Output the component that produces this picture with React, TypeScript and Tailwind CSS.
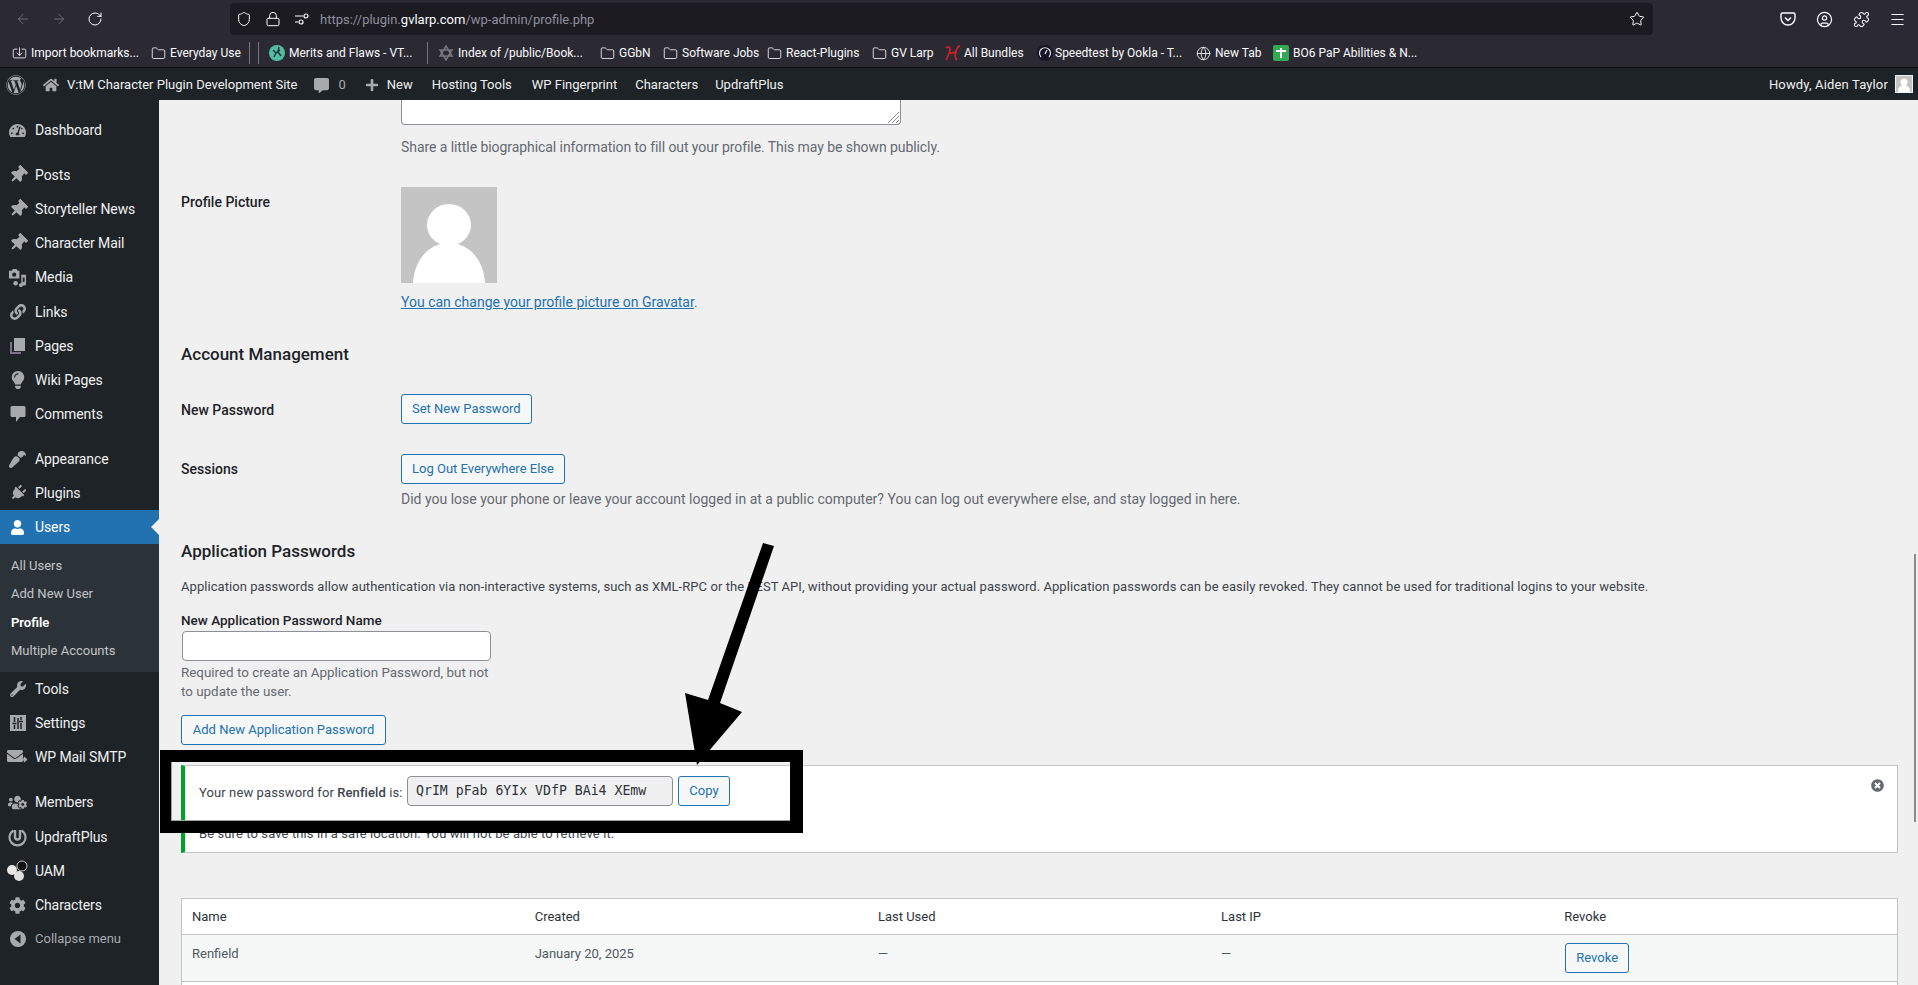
import React from 'react';
import { ArrowLeft, ArrowRight, RotateCw, Shield, Lock, Star, CircleUser, Puzzle, Menu, Folder, Globe, Import } from 'lucide-react';
import {
    FaWordpress, FaHome, FaCommentAlt, FaPlus, FaTachometerAlt, FaThumbtack, FaLink, FaLightbulb, FaPaintBrush,
    FaPlug, FaUser, FaWrench, FaUsersCog, FaCog, FaTimesCircle, FaEnvelope, FaLongArrowAltRight,
} from 'react-icons/fa';

const MediaIcon = () => (
    <svg width="19" height="19" viewBox="0 0 20 20" fill="#a7aaad">
        <path d="M1 3h3l1-2h4l1 2h2v8H1z" />
        <circle cx="6.5" cy="7" r="2.2" fill="#1d2327" />
        <path d="M14 7h5v9.5a2 2 0 1 1-1.5-1.9V10h-2v8a2 2 0 1 1-1.5-1.9z" />
        <circle cx="8" cy="16" r="2.4" />
    </svg>
);

const PagesIcon = () => (
    <svg width="17" height="18" viewBox="0 0 17 18">
        <path d="M1 5h2v10h9v2H1z" fill="#7b7385" />
        <rect x="5" y="1" width="11" height="13" fill="#a7aaad" />
    </svg>
);

const BubbleIcon = () => (
    <svg width="16" height="18" viewBox="0 0 16 18" fill="#a7aaad">
        <path d="M2 1h12a1.5 1.5 0 0 1 1.5 1.5v8A1.5 1.5 0 0 1 14 12h-4l-4 5v-5H2A1.5 1.5 0 0 1 .5 10.500v-8A1.500 1.500 0 0 1 2 1z" />
    </svg>
);

const SettingsIcon = () => (
    <svg width="16" height="16" viewBox="0 0 16 16">
        <rect width="16" height="16" fill="#a7aaad" />
        <path d="M4.500 2v5M4.500 10v4M11 2v3M11 8v6M8 3v11" stroke="#1d2327" strokeWidth="1.500" />
        <path d="M2.500 8.500h4M9 6.500h4" stroke="#1d2327" strokeWidth="1.500" />
    </svg>
);

const MailIcon = () => (
    <span className="relative block w-[21px] h-[18px]">
        <FaEnvelope size={16} color="#a7aaad" />
        <FaLongArrowAltRight size={13} color="#a7aaad" className="absolute right-0 bottom-0" />
    </span>
);

const UpdraftIcon = () => (
    <svg width="19" height="19" viewBox="0 0 19 19" fill="none">
        <path d="M5.500 2.500a8 8 0 1 0 8 0" stroke="#a7aaad" strokeWidth="2.200" />
        <path d="M7 2v7a2.500 2.500 0 0 0 5 0V2" stroke="#a7aaad" strokeWidth="2.400" />
    </svg>
);

const UamIcon = () => (
    <svg width="24" height="22" viewBox="0 0 24 22">
        <circle cx="6" cy="10" r="5" fill="#e8e8e8" />
        <circle cx="13" cy="16" r="5" fill="#e0e0e0" />
        <circle cx="16" cy="6" r="5" fill="#111" stroke="#c3c4c7" strokeWidth="1" />
    </svg>
);

const CollapseIcon = () => (
    <svg width="16" height="16" viewBox="0 0 16 16">
        <circle cx="8" cy="8" r="8" fill="#a7aaad" />
        <path d="M10.500 3.500v9L4.500 8z" fill="#1d2327" />
    </svg>
);

const pin = <FaThumbtack size={18} color="#a7aaad" className="rotate-45" />;

const NavItem = ({ icon, label, gap, nudge, current }: { icon: React.ReactNode; label: string; gap?: boolean; nudge?: boolean; current?: boolean }) => (
    <div className={`flex items-center h-[34px] text-[14px] tracking-[-0.1px] text-[#f0f0f1] ${gap ? 'mt-[11px]' : ''} ${nudge ? 'mt-[1px]' : ''} ${current ? 'bg-[#2271b1] text-white relative' : ''}`}>
        <span className="w-[35px] flex justify-center shrink-0">{icon}</span>
        <span>{label}</span>
        {current && <span className="absolute right-0 top-[9px] border-y-[8px] border-r-[8px] border-y-transparent border-r-[#f0f0f1]" />}
    </div>
);

const SubItem = ({ label, active }: { label: string; active?: boolean }) => (
    <div className={`h-[28.250px] leading-[28px] pl-[11px] text-[13px] ${active ? 'font-semibold text-white' : 'text-[#c3c4c7]'}`}>{label}</div>
);

const Sidebar = () => (
    <aside className="w-[159px] shrink-0 bg-[#1d2327] pt-[13px]">
        <NavItem icon={<FaTachometerAlt size={17} color="#a7aaad" />} label="Dashboard" />
        <NavItem gap icon={pin} label="Posts" />
        <NavItem icon={pin} label="Storyteller News" />
        <NavItem icon={pin} label="Character Mail" />
        <NavItem icon={<MediaIcon />} label="Media" />
        <NavItem nudge icon={<FaLink size={16} color="#a7aaad" />} label="Links" />
        <NavItem icon={<PagesIcon />} label="Pages" />
        <NavItem icon={<FaLightbulb size={18} color="#a7aaad" />} label="Wiki Pages" />
        <NavItem icon={<BubbleIcon />} label="Comments" />
        <NavItem gap icon={<FaPaintBrush size={17} color="#a7aaad" className="rotate-180" />} label="Appearance" />
        <NavItem icon={<FaPlug size={16} color="#a7aaad" className="rotate-45" />} label="Plugins" />
        <NavItem current icon={<FaUser size={15} color="#fff" />} label="Users" />
        <div className="bg-[#2c3338] h-[128px] pt-[8px]">
            <SubItem label="All Users" />
            <SubItem label="Add New User" />
            <SubItem label="Profile" active />
            <SubItem label="Multiple Accounts" />
        </div>
        <NavItem icon={<FaWrench size={16} color="#a7aaad" />} label="Tools" />
        <NavItem icon={<SettingsIcon />} label="Settings" />
        <NavItem icon={<MailIcon />} label="WP Mail SMTP" />
        <NavItem gap icon={<FaUsersCog size={19} color="#a7aaad" />} label="Members" />
        <NavItem nudge icon={<UpdraftIcon />} label="UpdraftPlus" />
        <NavItem icon={<UamIcon />} label="UAM" />
        <NavItem icon={<FaCog size={17} color="#a7aaad" />} label="Characters" />
        <div className="flex items-center h-[34px] text-[13px] text-[#a7aaad]">
            <span className="w-[35px] flex justify-center shrink-0"><CollapseIcon /></span>
            <span>Collapse menu</span>
        </div>
    </aside>
);

const Btn = ({ children, className = '' }: { children: React.ReactNode; className?: string }) => (
    <button className={`h-[30px] px-[10px] rounded-[3px] border border-[#2271b1] bg-[#f6f7f7] text-[#2271b1] text-[13px] leading-[28px] ${className}`}>{children}</button>
);

const Avatar = () => (
    <svg width="96" height="96" viewBox="0 0 96 96" className="block">
        <rect width="96" height="96" fill="#c4c4c4" />
        <ellipse cx="48" cy="38" rx="22" ry="21" fill="#fff" />
        <path d="M12 96c1-22 15-40 36-40s35 18 36 40z" fill="#fff" />
    </svg>
);

const FolderMark = () => <Folder size={15} strokeWidth={1.300} color="#fbfbfe" className="shrink-0" />;

const MeritsMark = () => (
    <svg width="16" height="16" viewBox="0 0 16 16" className="shrink-0">
        <circle cx="8" cy="8" r="8" fill="#4fbf9f" />
        <path d="M4 5l3 3-2 4M10 2l-1 5 3 4M7 8l4-3" stroke="#20303a" strokeWidth="1.500" fill="none" />
    </svg>
);

const StarMark = () => (
    <svg width="16" height="16" viewBox="0 0 16 16" className="shrink-0" fill="none" stroke="#77767c" strokeWidth="1.500">
        <path d="M8 1l6 10H2zM8 15L2 5h12z" />
    </svg>
);

const BundleMark = () => (
    <svg width="16" height="16" viewBox="0 0 16 16" className="shrink-0" fill="none" stroke="#c8202c" strokeWidth="1.800">
        <path d="M1 3c2-2 4-1 4 1 0 4-2 7-4 11M15 1c-2 0-3 2-4 5-1 3-1 7 1 9M3 9c3-1 6-2 9-2" />
    </svg>
);

const SpeedMark = () => (
    <svg width="16" height="16" viewBox="0 0 16 16" className="shrink-0" fill="none">
        <circle cx="8" cy="8" r="8" fill="#141526" />
        <path d="M4 12a5.500 5.500 0 1 1 8 0M8 9l2-4" stroke="#e6e6e6" strokeWidth="1.200" />
    </svg>
);

const SheetMark = () => (
    <svg width="16" height="16" viewBox="0 0 16 16" className="shrink-0">
        <rect width="16" height="16" rx="2" fill="#34a853" />
        <path d="M3 6h10M8 3v10" stroke="#fff" strokeWidth="2" />
    </svg>
);

const Bookmark = ({ icon, label, className }: { icon: React.ReactNode; label: string; className: string }) => (
    <div className={`flex items-center shrink-0 whitespace-nowrap ${className}`}>
        {icon}
        <span>{label}</span>
    </div>
);

const BrowserChrome = () => (
    <div className="h-[68px] shrink-0 bg-[#2b2a33] border-b border-[#0c0c0d] text-[#fbfbfe]">
        <div className="h-[35px] pt-[3px] flex items-start">
            <div className="w-[230px] h-[32px] flex items-center shrink-0 pl-[15px] gap-[20px]">
                <ArrowLeft size={16} strokeWidth={1.500} color="#6d6c73" />
                <ArrowRight size={16} strokeWidth={1.500} color="#6d6c73" />
                <RotateCw size={16} strokeWidth={1.500} color="#fbfbfe" />
            </div>
            <div className="w-[1423px] h-[32px] rounded-[4px] bg-[#1c1b22] flex items-center shrink-0 pl-[49px] relative">
                <Shield size={16} strokeWidth={1.500} className="absolute left-[6px]" />
                <Lock size={16} strokeWidth={1.500} className="absolute left-[35px]" />
                <svg width="16" height="16" viewBox="0 0 16 16" fill="none" stroke="#fbfbfe" strokeWidth="1.200" className="mr-[10px] ml-[15px] shrink-0">
                    <path d="M1 5h8M1 11h3" />
                    <circle cx="12" cy="5" r="2" />
                    <circle cx="7" cy="11" r="2" />
                </svg>
                <span className="pt-[2px] text-[13px] text-[#8f8f9d]">https://plugin.<span className="text-[#fbfbfe]">gvlarp.com</span>/wp-admin/profile.php</span>
                <Star size={16} strokeWidth={1.500} className="absolute right-[8px]" />
            </div>
            <div className="flex-1 h-[32px] relative">
                <svg width="16" height="16" viewBox="0 0 16 16" fill="none" stroke="#fbfbfe" strokeWidth="1.400" className="absolute left-[127px] top-[8px]">
                    <path d="M2.500 2h11A1.500 1.500 0 0 1 15 3.500V7a7 7 0 0 1-14 0V3.500A1.500 1.500 0 0 1 2.500 2z" />
                    <path d="M5 6.500l3 3 3-3" />
                </svg>
                <CircleUser size={17} strokeWidth={1.700} className="absolute left-[163px] top-[8px]" />
                <Puzzle size={17} strokeWidth={1.500} className="absolute left-[200px] top-[8px]" />
                <Menu size={17} strokeWidth={1.500} className="absolute left-[236px] top-[8px]" />
            </div>
        </div>
        <div className="h-[32px] pt-[4px] flex items-center text-[12px] pl-[12px]">
            <Bookmark className="w-[139px] gap-[4px]" icon={<Import size={15} strokeWidth={1.300} />} label="Import bookmarks..." />
            <Bookmark className="w-[98px] gap-[4px]" icon={<FolderMark />} label="Everyday Use" />
            <span className="w-[9px] h-[22px] border-l border-[#77767c] shrink-0" />
            <span className="w-[11px] h-[22px] border-l border-[#77767c] shrink-0" />
            <Bookmark className="w-[158px] gap-[4px]" icon={<MeritsMark />} label="Merits and Flaws - VT..." />
            <span className="w-[11px] h-[22px] border-l border-[#77767c] shrink-0" />
            <Bookmark className="w-[162px] gap-[4px]" icon={<StarMark />} label="Index of /public/Book..." />
            <Bookmark className="w-[63px] gap-[4px]" icon={<FolderMark />} label="GGbN" />
            <Bookmark className="w-[104px] gap-[4px]" icon={<FolderMark />} label="Software Jobs" />
            <Bookmark className="w-[105px] gap-[4px]" icon={<FolderMark />} label="React-Plugins" />
            <Bookmark className="w-[73px] gap-[4px]" icon={<FolderMark />} label="GV Larp" />
            <Bookmark className="w-[92px] gap-[3px]" icon={<BundleMark />} label="All Bundles" />
            <Bookmark className="w-[159px] gap-[2px]" icon={<SpeedMark />} label="Speedtest by Ookla - T..." />
            <Bookmark className="w-[77px] gap-[4px]" icon={<Globe size={15} strokeWidth={1.300} />} label="New Tab" />
            <Bookmark className="w-[150px] gap-[4px]" icon={<SheetMark />} label="BO6 PaP Abilities & N..." />
        </div>
    </div>
);

const AdminBar = () => (
    <div className="h-[32px] shrink-0 bg-[#1d2327] pt-[2px] flex items-center text-[13px] text-[#f0f0f1] relative">
        <FaWordpress size={20} color="#a7aaad" className="ml-[6px] shrink-0" />
        <FaHome size={16} color="#a7aaad" className="ml-[17px] shrink-0" />
        <span className="ml-[8px]">V:tM Character Plugin Development Site</span>
        <FaCommentAlt size={15} color="#a7aaad" className="ml-[17px] shrink-0" />
        <span className="ml-[9px] text-[#a7aaad]">0</span>
        <FaPlus size={14} color="#a7aaad" className="ml-[19px] shrink-0" />
        <span className="ml-[8px]">New</span>
        <span className="ml-[19px]">Hosting Tools</span>
        <span className="ml-[20px]">WP Fingerprint</span>
        <span className="ml-[18px]">Characters</span>
        <span className="ml-[17px]">UpdraftPlus</span>
        <span className="ml-auto tracking-[0.15px]">Howdy, Aiden Taylor</span>
        <span className="ml-[7px] mr-[5px] -mt-[2px] w-[18px] h-[18px] bg-[#c4c4c4] border border-[#f0f0f1] flex items-end justify-center overflow-hidden">
            <svg width="14" height="15" viewBox="0 0 14 15" fill="#fff">
                <circle cx="7" cy="5" r="3.500" />
                <path d="M1 15c0-5 3-7 6-7s6 2 6 7z" />
            </svg>
        </span>
    </div>
);

const NewPasswordNotice = () => (
    <div className="mt-[20px] h-[88px] bg-white border border-[#c3c4c7] border-l-4 border-l-[#00a32a] relative pl-[14px] pt-[10px] tracking-[0.1px]">
        <div className="flex items-center h-[30px]">
            <span className="mt-[4px] w-[203px] shrink-0 whitespace-nowrap">Your new password for <strong className="font-medium">Renfield</strong> is:</span>
            <div className="ml-[5px] w-[266px] h-[30px] rounded-[4px] border border-[#8c8f94] bg-[#f0f0f1] pl-[8px] leading-[27px] font-['DejaVu_Sans_Mono',monospace] text-[13.200px] tracking-normal text-[#2c3338] whitespace-pre">QrIM pFab 6YIx VDfP BAi4 XEmw</div>
            <Btn className="ml-[5px] w-[52px] -mt-[1px] tracking-normal">Copy</Btn>
        </div>
        <p className="mt-[19px] leading-[18px]">Be sure to save this in a safe location. You will not be able to retrieve it.</p>
        <FaTimesCircle size={13} color="#646970" className="absolute right-[13px] top-[13px]" />
    </div>
);

const PasswordsTable = () => (
    <table className="mt-[45px] w-full table-fixed border-collapse bg-white border border-[#c3c4c7] text-left">
        <thead>
            <tr className="h-[36px] border-b border-[#c3c4c7] text-[#2c3338]">
                <th className="font-normal pl-[10px]">Name</th>
                <th className="font-normal pl-[10px]">Created</th>
                <th className="font-normal pl-[10px]">Last Used</th>
                <th className="font-normal pl-[10px]">Last IP</th>
                <th className="font-normal pl-[10px]">Revoke</th>
            </tr>
        </thead>
        <tbody className="text-[#50575e]">
            <tr className="h-[47px] bg-[#f6f7f7] border-b border-[#c3c4c7]">
                <td className="pl-[10px] pb-[9px]">Renfield</td>
                <td className="pl-[10px] pb-[9px]">January 20, 2025</td>
                <td className="pl-[10px] pb-[9px]">—</td>
                <td className="pl-[10px] pb-[9px]">—</td>
                <td className="pl-[11px]"><Btn>Revoke</Btn></td>
            </tr>
            <tr className="h-[40px]"><td colSpan={5} /></tr>
        </tbody>
    </table>
);

const ProfileContent = () => (
    <main className="flex-1 min-w-0 bg-[#f0f0f1] pl-[22px] pr-[20px] text-[13px] leading-[18px] text-[#3c434a] overflow-hidden">
        <div className="ml-[220px] w-[500px] h-[25px] bg-white border border-t-0 border-[#8c8f94] rounded-b-[4px] relative">
            <svg width="14" height="14" viewBox="0 0 14 14" stroke="#8c8f94" strokeWidth="1" className="absolute right-0 bottom-0">
                <path d="M13 2L2 13M13 6l-7 7M13 10l-3 3" />
            </svg>
        </div>
        <p className="ml-[220px] mt-[13px] text-[14px] tracking-[-0.07px] text-[#646970]">Share a little biographical information to fill out your profile. This may be shown publicly.</p>

        <div className="flex mt-[31px]">
            <div className="w-[220px] shrink-0 pt-[6px] text-[14px] font-medium text-[#1d2327]">Profile Picture</div>
            <div>
                <Avatar />
                <p className="mt-[10px] text-[14px] text-[#646970]"><a className="text-[#2271b1] underline">You can change your profile picture on Gravatar</a>.</p>
            </div>
        </div>

        <h2 className="mt-[31px] text-[17px] leading-[24px] font-medium text-[#1d2327]">Account Management</h2>
        <div className="flex mt-[28px]">
            <div className="w-[220px] h-[30px] shrink-0 text-[14px] leading-[32px] font-medium text-[#1d2327]">New Password</div>
            <Btn>Set New Password</Btn>
        </div>
        <div className="flex mt-[30px]">
            <div className="w-[220px] shrink-0 text-[14px] leading-[30px] font-medium text-[#1d2327]">Sessions</div>
            <div>
                <Btn>Log Out Everywhere Else</Btn>
                <p className="mt-[6px] text-[14px] text-[#646970]">Did you lose your phone or leave your account logged in at a public computer? You can log out everywhere else, and stay logged in here.</p>
            </div>
        </div>

        <h2 className="mt-[31px] text-[17px] leading-[24px] font-medium text-[#1d2327]">Application Passwords</h2>
        <p className="mt-[15px] tracking-[0.06px]">Application passwords allow authentication via non-interactive systems, such as XML-RPC or the REST API, without providing your actual password. Application passwords can be easily revoked. They cannot be used for traditional logins to your website.</p>
        <div className="mt-[15px] text-[13.500px] font-medium text-[#1d2327]">New Application Password Name</div>
        <div className="ml-[1px] mt-[2px] w-[309px] h-[30px] bg-white border border-[#8c8f94] rounded-[4px]" />
        <p className="mt-[2px] w-[320px] text-[13.400px] leading-[19px] text-[#646970]">Required to create an Application Password, but not to update the user.</p>
        <Btn className="block mt-[14px] w-[205px]">Add New Application Password</Btn>

        <NewPasswordNotice />
        <PasswordsTable />
    </main>
);

// annotation drawn on top of the screenshot, plus the page scrollbar thumb
const Annotation = () => (
    <>
        <svg width="1918" height="985" className="absolute left-0 top-0 pointer-events-none" fill="#000">
            <path d="M763 543l11 3-54 157 22 9-45 53-12-72 23 7z" />
        </svg>
        <div className="absolute left-[160px] top-[750px] w-[643px] h-[83px] border-solid border-black border-t-[12px] border-b-[12px] border-l-[11px] border-r-[13px] pointer-events-none">
            <div className="h-full border-l border-b border-[#a0a0a0]" />
        </div>
        <div className="absolute left-[1914px] top-[554px] w-[2px] h-[268px] bg-[#8a8a8a]" />
    </>
);

export default function App() {
    return (
        <div className="w-[1918px] h-[985px] overflow-hidden relative flex flex-col font-['Roboto','Liberation_Sans',sans-serif]">
            <BrowserChrome />
            <AdminBar />
            <div className="flex flex-1 min-h-0">
                <Sidebar />
                <ProfileContent />
            </div>
            <Annotation />
        </div>
    );
}
